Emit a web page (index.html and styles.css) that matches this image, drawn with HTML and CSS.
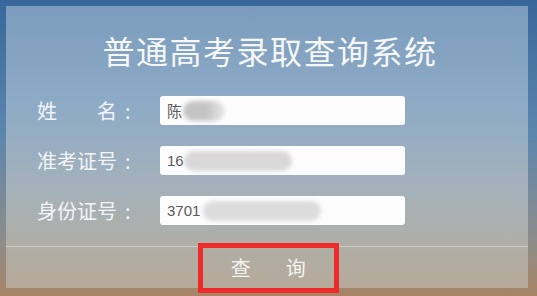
FILE: index.html
```html
<!DOCTYPE html>
<html>
<head>
    <meta charset="utf-8">
    <title>普通高考录取查询系统</title>
    <link rel="stylesheet" href="styles.css">
</head>
<body>
    <div class="page">
        <div class="panel">
            <h1 class="title">普通高考录取查询系统</h1>
            <div class="form">
                <div class="row">
                    <span class="label">姓　　名<b class="colon">:</b></span>
                    <div class="field"><span>陈</span><i class="blob blob-name"></i></div>
                </div>
                <div class="row">
                    <span class="label">准考证号<b class="colon">:</b></span>
                    <div class="field"><span>16</span><i class="blob blob-no"></i></div>
                </div>
                <div class="row">
                    <span class="label">身份证号<b class="colon">:</b></span>
                    <div class="field"><span>3701</span><i class="blob blob-id"></i></div>
                </div>
            </div>
            <div class="foot">
                <div class="btn">查　询</div>
            </div>
        </div>
    </div>
</body>
</html>
```

FILE: styles.css
```css
*{
	margin: 0;
	padding: 0;
	box-sizing: border-box;
}
body{
	width: 537px;
	height: 296px;
	overflow: hidden;
	font-family: "Noto Sans CJK SC", "Liberation Sans", sans-serif;
	background: linear-gradient(#37669a 0%, #5d86ae 45%, #8e8d89 82%, #a98466 100%);
}
.page{
	padding: 6px 9px 0 6px;
}
.panel{
	width: 522px;
	height: 282px;
	padding-top: 24px;
	background: linear-gradient(#7b9cbd 0%, #8eabc6 35%, #a4b1ba 65%, #b0aea6 85%, #b6aa9a 100%);
}
.title{
	font-size: 32px;
	line-height: 40px;
	font-weight: normal;
	color: #f5f7f9;
	text-align: center;
	letter-spacing: 1.5px;
	padding-left: 6px;
}
.form{
	margin-top: 26px;
	padding-left: 31px;
}
.row{
	display: flex;
	align-items: center;
	height: 29px;
	margin-bottom: 21px;
}
.label{
	width: 123px;
	font-size: 20px;
	line-height: 29px;
	color: #f2f5f8;
}
.colon{
	font-weight: normal;
	margin-left: 8px;
}
.field{
	width: 245px;
	height: 29px;
	display: flex;
	align-items: center;
	padding-left: 7px;
	background: #fdfdfd;
	border-radius: 3px;
	font-family: "Liberation Sans", "Noto Sans CJK SC", sans-serif;
	font-size: 15px;
	color: #5a5a5a;
}
.blob{
	display: block;
	height: 20px;
	border-radius: 10px;
	filter: blur(2px);
}
.blob-name{
	width: 42px;
	margin-left: 1px;
	background: linear-gradient(90deg, #c4c4c4 55%, #e8e8e8);
}
.blob-no{
	width: 108px;
	background: #d8d8d8;
}
.blob-id{
	width: 118px;
	margin-left: 3px;
	background: #dcdcdc;
}
.foot{
	margin-top: 4px;
	border-top: 1px solid rgba(255,255,255,0.35);
	display: flex;
	justify-content: center;
}
.btn{
	width: 141px;
	height: 50px;
	margin-top: -4px;
	margin-left: 3px;
	border: 5px solid #ee2a2a;
	font-size: 20px;
	line-height: 40px;
	color: #f3f3f3;
	text-align: center;
	letter-spacing: 7.5px;
	padding-left: 7px;
}
```
